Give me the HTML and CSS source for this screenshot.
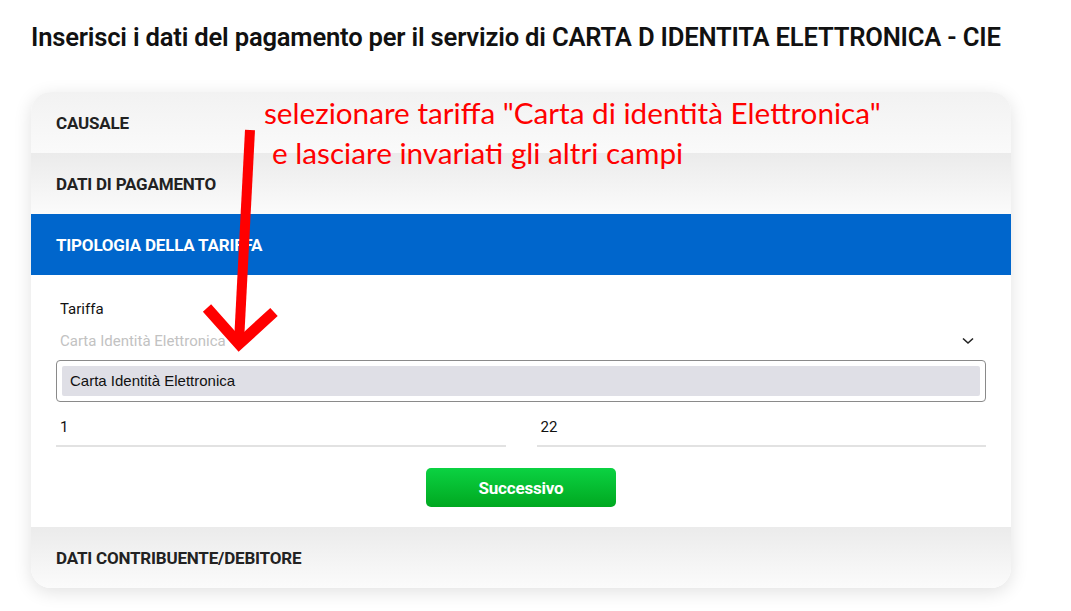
FILE: index.html
```html
<!DOCTYPE html>
<html lang="it">
<head>
<meta charset="utf-8">
<title>Pagamento</title>
<link rel="stylesheet" href="styles.css">
</head>
<body>
<div class="page">
  <h1 class="title">Inserisci i dati del pagamento per il servizio di CARTA D IDENTITA ELETTRONICA - CIE</h1>
  <div class="card">
    <div class="row">CAUSALE</div>
    <div class="row">DATI DI PAGAMENTO</div>
    <div class="row active">TIPOLOGIA DELLA TARIFFA</div>
    <div class="body">
      <div class="field">
        <div class="label">Tariffa</div>
        <div class="select">
          <span class="placeholder">Carta Identità Elettronica</span>
          <svg class="chev" width="12" height="8" viewBox="0 0 12 8"><path d="M1 1.5 L6 6 L11 1.5" fill="none" stroke="#222" stroke-width="1.6"/></svg>
        </div>
        <div class="popup"><div class="option">Carta Identità Elettronica</div></div>
      </div>
      <div class="inputs">
        <div class="input">1</div>
        <div class="input">22</div>
      </div>
      <div class="actions"><button class="btn">Successivo</button></div>
    </div>
    <div class="row last">DATI CONTRIBUENTE/DEBITORE</div>
  </div>
  <div class="note">
    <div class="note-l1">selezionare tariffa "Carta di identità Elettronica"</div>
    <div class="note-l2">e lasciare invariati gli altri campi</div>
  </div>
  <svg class="arrow" width="1071" height="611" viewBox="0 0 1071 611">
    <path d="M250 130 L239 342" stroke="#ff0000" stroke-width="10" fill="none"/>
    <path d="M207 308 L239 344 L274 312" stroke="#ff0000" stroke-width="11" fill="none" stroke-linejoin="miter"/>
  </svg>
</div>
</body>
</html>
```
FILE: styles.css
```css
* { box-sizing: border-box; }
html, body { margin: 0; padding: 0; background: #fff; }
.page {
  position: relative;
  width: 1071px;
  height: 611px;
  overflow: hidden;
  padding: 20px 0 0 31px;
  font-family: Roboto, "Noto Sans", sans-serif;
}
.title {
  margin: 0;
  font-size: 25.6px;
  font-weight: 600;
  color: #111;
  line-height: 34px;
  letter-spacing: -0.2px;
  white-space: nowrap;
}
.card {
  margin-top: 38px;
  width: 980px;
  border-radius: 20px;
  box-shadow: 0 4px 18px rgba(0,0,0,0.12);
  overflow: hidden;
  background: #fff;
}
.row {
  height: 61px;
  display: flex;
  align-items: center;
  padding-left: 25px;
  font-size: 17px;
  font-weight: 700;
  color: #222;
  background: linear-gradient(#ebebeb, #fbfbfb);
  letter-spacing: -0.2px;
}
.row:first-child { background: linear-gradient(#f2f2f2, #fafafa); }
.row.active { background: #0066cc; color: #fff; }
.body { padding: 24px 25px 20px; }
.field { position: relative; }
.label { font-size: 15px; color: #111; padding-left: 4px; line-height: 20px; }
.select {
  display: flex;
  justify-content: space-between;
  align-items: center;
  height: 24px;
  margin-top: 10px;
  padding: 0 12px 0 4px;
}
.placeholder { font-size: 15px; color: #c2c2c2; }
.chev { display: block; }
.popup {
  position: absolute;
  left: 0;
  right: 0;
  top: 61px;
  height: 42px;
  border: 1px solid #8a8a8a;
  border-radius: 4px;
  background: #fff;
  padding: 5px;
  z-index: 2;
}
.option {
  height: 30px;
  background: #dfdfe6;
  border-radius: 2px;
  font-family: "Liberation Sans", Arial, sans-serif;
  font-size: 15px;
  color: #111;
  line-height: 29px;
  padding-left: 8px;
}
.inputs {
  display: flex;
  gap: 31px;
  margin-top: 60px;
}
.input {
  flex: 1;
  font-size: 15px;
  color: #111;
  padding: 4px 0 8px 4px;
  border-bottom: 2px solid #e2e2e2;
  line-height: 20px;
}
.actions { display: flex; justify-content: center; margin-top: 21px; }
.btn {
  width: 190px;
  height: 39px;
  border: none;
  border-radius: 5px;
  background: linear-gradient(#0bd242, #00a820);
  color: #fff;
  font-family: Roboto, sans-serif;
  font-weight: 700;
  font-size: 17px;
  letter-spacing: -0.2px;
}
.row.last { background: linear-gradient(#ebebeb, #fbfbfb); }
.note {
  position: absolute;
  left: 264px;
  top: 93px;
  color: #ff0000;
  font-family: Lato, "Noto Sans", sans-serif;
  font-size: 29.7px;
  line-height: 40px;
  z-index: 3;
}
.note-l2 { padding-left: 8px; }
.arrow { position: absolute; left: 0; top: 0; z-index: 4; pointer-events: none; }
```
